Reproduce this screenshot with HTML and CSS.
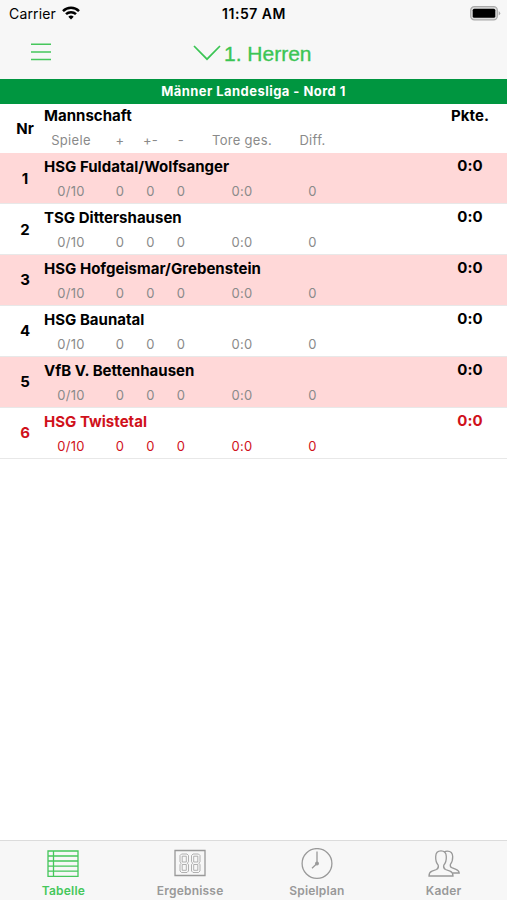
FILE: index.html
```
<!DOCTYPE html>
<html lang="de">
<head>
    <meta charset="utf-8">
    <title>1. Herren - Tabelle</title>
    <link rel="stylesheet" href="styles.css">
</head>
<body>
    <header>
        <div class="status">
            <div class="carrier">
                <span>Carrier</span>
                <svg width="18" height="14" viewBox="0 0 18 14" fill="none" stroke="#000" stroke-width="2.5">
                    <path d="M1 5.1a11.4 11.4 0 0 1 16 0"/>
                    <path d="M4 8.2a7.2 7.2 0 0 1 10 0"/>
                    <path d="M6.3 10.7a3.9 3.9 0 0 1 5.4 0L9 13.5z" fill="#000" stroke="none"/>
                </svg>
            </div>
            <span class="time">11:57 AM</span>
            <svg class="battery" width="31" height="15" viewBox="0 0 31 15">
                <rect x=".7" y=".7" width="26.6" height="13.1" rx="3.6" fill="#ddd" stroke="#aaa" stroke-width="1.2"/>
                <rect x="2.7" y="2.7" width="22.6" height="9.1" rx="1.6"/>
                <path d="M28.7 5q3 2.3 0 4.6z" fill="#aaa"/>
            </svg>
        </div>
        <nav class="navbar">
            <svg class="menu" width="20" height="18" viewBox="0 0 20 18" stroke="#46c75c" stroke-width="1.5">
                <path d="M0 1.3h20M0 9h20M0 16.5h20"/>
            </svg>
            <svg class="chevron" width="28" height="16" viewBox="0 0 28 16" fill="none" stroke="#3bc554" stroke-width="1.7">
                <path d="M1 1l13 13.2L27 1"/>
            </svg>
            <h1>1. Herren</h1>
        </nav>
    </header>
    <h2 class="league">Männer Landesliga - Nord 1</h2>

    <main>
        <div class="row head">
            <div class="nr">Nr</div>
            <div class="team">
                <div class="name">Mannschaft</div>
                <div class="stats"><span>Spiele</span><span>+</span><span>+-</span><span>-</span><span>Tore ges.</span><span>Diff.</span></div>
            </div>
            <div class="points">Pkte.</div>
        </div>
        <div class="row odd">
            <div class="nr">1</div>
            <div class="team">
                <div class="name">HSG Fuldatal/Wolfsanger</div>
                <div class="stats"><span>0/10</span><span>0</span><span>0</span><span>0</span><span>0:0</span><span>0</span></div>
            </div>
            <div class="points">0:0</div>
        </div>
        <div class="row">
            <div class="nr">2</div>
            <div class="team">
                <div class="name">TSG Dittershausen</div>
                <div class="stats"><span>0/10</span><span>0</span><span>0</span><span>0</span><span>0:0</span><span>0</span></div>
            </div>
            <div class="points">0:0</div>
        </div>
        <div class="row odd">
            <div class="nr">3</div>
            <div class="team">
                <div class="name">HSG Hofgeismar/Grebenstein</div>
                <div class="stats"><span>0/10</span><span>0</span><span>0</span><span>0</span><span>0:0</span><span>0</span></div>
            </div>
            <div class="points">0:0</div>
        </div>
        <div class="row">
            <div class="nr">4</div>
            <div class="team">
                <div class="name">HSG Baunatal</div>
                <div class="stats"><span>0/10</span><span>0</span><span>0</span><span>0</span><span>0:0</span><span>0</span></div>
            </div>
            <div class="points">0:0</div>
        </div>
        <div class="row odd">
            <div class="nr">5</div>
            <div class="team">
                <div class="name">VfB V. Bettenhausen</div>
                <div class="stats"><span>0/10</span><span>0</span><span>0</span><span>0</span><span>0:0</span><span>0</span></div>
            </div>
            <div class="points">0:0</div>
        </div>
        <div class="row own">
            <div class="nr">6</div>
            <div class="team">
                <div class="name">HSG Twistetal</div>
                <div class="stats"><span>0/10</span><span>0</span><span>0</span><span>0</span><span>0:0</span><span>0</span></div>
            </div>
            <div class="points">0:0</div>
        </div>
    </main>

    <footer class="tabs">
        <div class="tab active">
            <svg width="32" height="32" viewBox="0 0 32 32">
                <path d="M1 3h30v25.3H1zM6.5 3v25.3M1 8h30M1 13h30M1 18.1h30M1 23.2h30"/>
            </svg>
            <span>Tabelle</span>
        </div>
        <div class="tab">
            <svg width="32" height="32" viewBox="0 0 32 32">
                <path d="M1 2.5h30v25H1z"/>
                <!-- scoreboard digits -->
                <g stroke-width=".75">
                    <path d="M7.500 6h5.500l1.500 1.500v6.200L13.300 15.200l1.200 1.500v6.300L13 24.500H7.500L6 23v-6.300l1.200-1.500L6 13.700V7.500z"/>
                    <path d="M8.200 8.200h4.100v5.800H8.200zM8.200 16.500h4.100v5.800H8.200z"/>
                    <path d="M19 6h5.500l1.500 1.500v6.200l-1.200 1.500 1.200 1.500v6.300l-1.500 1.500H19L17.500 23v-6.300l1.200-1.500-1.200-1.500V7.500z"/>
                    <path d="M19.700 8.200h4.100v5.800h-4.100zM19.700 16.500h4.100v5.800h-4.100z"/>
                </g>
            </svg>
            <span>Ergebnisse</span>
        </div>
        <div class="tab">
            <svg width="32" height="32" viewBox="0 0 32 32">
                <circle cx="16" cy="15.5" r="14.9"/>
                <path d="M16 3.5v12l-5 4.800"/>
                <circle cx="16" cy="15.5" r="1.3" fill="currentColor"/>
            </svg>
            <span>Spielplan</span>
        </div>
        <div class="tab">
            <svg width="32" height="32" viewBox="0 0 32 32">
                <path d="M1 28C1 25 2 24 4 23.200L8.500 21.500C10.500 20.500 10.700 19 10.200 17.200C8.300 15 7.500 12.500 7.700 8.500C7.800 5 9.700 2.900 13 2.900S18.200 5 18.300 8.500C18.500 12.500 17.700 15 15.800 17.200C15.300 19 15.500 20.500 17.500 21.500L22 23.200C24 24 25 25 25 28Z"/>
                <path d="M16.200 4.100C17 3.500 18.100 3.200 19.400 3.200C22.700 3.200 24.600 5.200 24.700 8.600C24.800 12 24.100 14.300 22.400 16.300C22 18 22.300 19 23.800 19.700L28 21.400C30 22.200 31 23.100 31.200 25H24.600"/>
            </svg>
            <span>Kader</span>
        </div>
    </footer>
</body>
</html>
```
FILE: styles.css
```
* { box-sizing: border-box; }
body { margin: 0; height: 900px; display: flex; flex-direction: column; background: #fff; color: #000; font-family: Inter, "Liberation Sans", sans-serif; overflow: hidden; }
svg { display: block; flex-shrink: 0; }
header { height: 79px; background: #f7f7f7; }

.status { display: grid; grid-template-columns: 1fr auto 1fr; align-items: center; height: 27px; padding: 0 6px 0 9px; font-size: 14px; }
.carrier { display: flex; align-items: center; gap: 6px; letter-spacing: 0.15px; }
.carrier svg { margin-top: -2px; }
.time { margin-right: 2px; font-weight: 600; letter-spacing: 0.5px; }
.battery { justify-self: end; }

.navbar { display: flex; align-items: center; height: 52px; padding-left: 31px; }
.menu { margin-top: -3px; }
.chevron { margin: -1px 3px 0 142px; }
h1 { margin: 2px 0 0; font-family: "Liberation Sans", Arial, sans-serif; font-size: 21px; font-weight: 400; color: #3bc554; -webkit-text-stroke: 0.35px #3bc554; }

.league { margin: 0; height: 25px; line-height: 25px; background: #009640; color: #fff; font-size: 13px; font-weight: 700; text-align: center; letter-spacing: 0.45px; }

.row { display: grid; grid-template-columns: 44px 1fr 74px; height: 50.9px; border-bottom: 1px solid #e8e8e8; font-size: 15px; }
.head { height: 49.2px; border-bottom: none; }
.odd { background: #ffd8d8; }
.own { color: #d0111b; }
.nr { align-self: center; padding-left: 6px; text-align: center; font-weight: 700; }
.name, .points { padding-top: 4px; line-height: 20px; font-weight: 700; letter-spacing: 0.02px; }
.points { padding-top: 3px; text-align: center; letter-spacing: 0.1px; }
.head .name, .head .points { padding-top: 2px; }
.stats { display: grid; grid-template-columns: 54px 44px 17px 44px 78px 63px; margin-top: 4px; line-height: 20px; font-size: 13px; color: #8a8a8a; text-align: center; letter-spacing: 0.3px; }
.own .stats { color: inherit; }

.tabs { display: grid; grid-template-columns: repeat(4, 1fr); margin-top: auto; height: 60px; padding-top: 7px; background: #f7f7f7; border-top: 1px solid #dcdcdc; color: #999; }
.tab { display: flex; flex-direction: column; align-items: center; gap: 3px; font-size: 12px; line-height: 15px; font-weight: 600; letter-spacing: 0.2px; }
.tab svg { fill: none; stroke: currentColor; stroke-width: 1.3; }
.active { color: #46c75c; }
```
